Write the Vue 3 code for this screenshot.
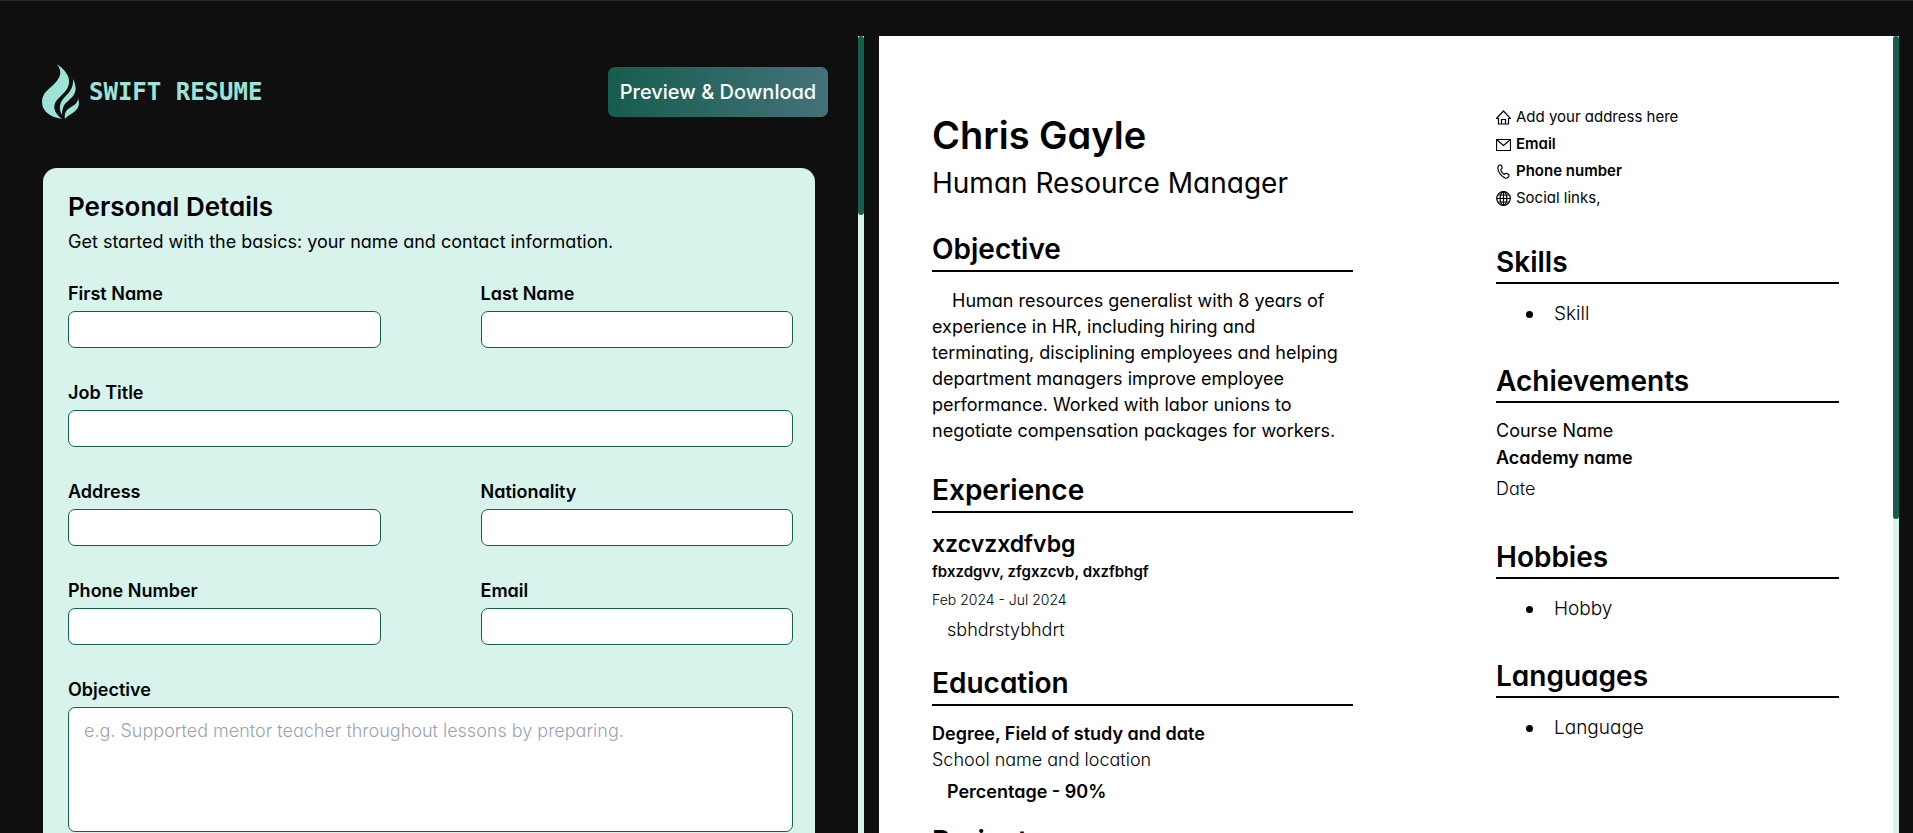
<script setup>
import { reactive } from 'vue'

const form = reactive({
  firstName: '',
  lastName: '',
  jobTitle: '',
  address: '',
  nationality: '',
  phone: '',
  email: '',
  objective: '',
})

const fields = [
  { key: 'firstName', label: 'First Name' },
  { key: 'lastName', label: 'Last Name' },
  { key: 'jobTitle', label: 'Job Title', wide: true },
  { key: 'address', label: 'Address' },
  { key: 'nationality', label: 'Nationality' },
  { key: 'phone', label: 'Phone Number' },
  { key: 'email', label: 'Email' },
]
</script>

<template>
  <div class="page">
    <section class="pane editor">
      <div class="scroll">
        <header class="topbar">
          <a class="logo" href="#">
            <svg class="flame" viewBox="0 0 38 56" aria-hidden="true">
              <path d="M15 0C23 6 28 12 27 19C26 27 20 30 15 36C10 42 12 49 20 55C9 53 0 48 0 38C0 28 8 25 14 18C19 12 20 7 15 0Z" />
              <path d="M31 15C34 21 35 27 31 32C28 36 22 39 21 44C20 47 20 49 20 51C17 46 17 40 21 35C25 30 32 26 31 15Z" />
              <path d="M36 34C38 40 37 44 32 48C28 51 25 52 23 55C22 49 24 46 29 43C34 40 36 38 36 34Z" />
            </svg>
            <span class="brand">SWIFT RESUME</span>
          </a>
          <button class="download" type="button">Preview &amp; Download</button>
        </header>

        <form class="card" @submit.prevent>
          <h2>Personal Details</h2>
          <p class="hint">Get started with the basics: your name and contact information.</p>
          <div class="fields">
            <div v-for="f in fields" :key="f.key" class="field" :class="{ wide: f.wide }">
              <label :for="f.key">{{ f.label }}</label>
              <input :id="f.key" v-model="form[f.key]" type="text" />
            </div>
            <div class="field wide">
              <label for="objective">Objective</label>
              <textarea
                id="objective"
                v-model="form.objective"
                placeholder="e.g. Supported mentor teacher throughout lessons by preparing."
              ></textarea>
            </div>
          </div>
        </form>
      </div>
      <div class="track"><div class="thumb short"></div></div>
    </section>

    <section class="pane preview">
      <div class="scroll">
        <article class="resume">
          <div class="main">
            <h1>Chris Gayle</h1>
            <p class="role">Human Resource Manager</p>

            <section class="block objective">
              <h2>Objective</h2>
              <p class="summary">
                Human resources generalist with 8 years of experience in HR, including hiring and
                terminating, disciplining employees and helping department managers improve employee
                performance. Worked with labor unions to negotiate compensation packages for workers.
              </p>
            </section>

            <section class="block experience">
              <h2>Experience</h2>
              <h3>xzcvzxdfvbg</h3>
              <p class="place">fbxzdgvv, zfgxzcvb, dxzfbhgf</p>
              <p class="period">Feb 2024 - Jul 2024</p>
              <p class="detail light">sbhdrstybhdrt</p>
            </section>

            <section class="block education">
              <h2>Education</h2>
              <p class="text strong">Degree, Field of study and date</p>
              <p class="text school light">School name and location</p>
              <p class="detail strong">Percentage - 90%</p>
            </section>

            <section class="block projects">
              <h2>Projects</h2>
            </section>
          </div>

          <aside class="side">
            <ul class="contact">
              <li>
                <svg viewBox="0 0 15 15" aria-hidden="true">
                  <path d="M.5 8.500L7.500 1L14.500 8.500H12.500V14H2.500V8.500ZM5.500 14V9.500H9.500V14" />
                </svg>
                <span>Add your address here</span>
              </li>
              <li class="strong">
                <svg viewBox="0 0 15 15" aria-hidden="true">
                  <path d="M.5 2.500H14.500V13.500H.5ZM1 3L7.500 8.500L14 3" />
                </svg>
                <span>Email</span>
              </li>
              <li class="strong">
                <svg viewBox="0 0 15 15" aria-hidden="true">
                  <path d="M3 1.500L4.500 .8C5.500 .8 6.500 3.500 6 4.500L4.800 5.700C5 7.500 6.800 10 8.500 10.300L10 9.300C11 9 13 10.800 13 11.800C13 13 11 14.500 9.500 14.200C5.500 13 2 8 1.800 4C1.800 3 2.200 2.200 3 1.500Z" />
                </svg>
                <span>Phone number</span>
              </li>
              <li>
                <svg viewBox="0 0 15 15" aria-hidden="true">
                  <circle cx="7.500" cy="7.500" r="6.800" />
                  <ellipse cx="7.500" cy="7.500" rx="3.400" ry="6.800" />
                  <path d="M7.500 .7V14.300M.7 7.500H14.300M1.800 4H13.200M1.800 11H13.200" />
                </svg>
                <span>Social links,</span>
              </li>
            </ul>

            <section class="block">
              <h2>Skills</h2>
              <ul class="bullets"><li>Skill</li></ul>
            </section>

            <section class="block">
              <h2>Achievements</h2>
              <p class="text">Course Name</p>
              <p class="text academy strong">Academy name</p>
              <p class="text date light">Date</p>
            </section>

            <section class="block">
              <h2>Hobbies</h2>
              <ul class="bullets"><li>Hobby</li></ul>
            </section>

            <section class="block">
              <h2>Languages</h2>
              <ul class="bullets"><li>Language</li></ul>
            </section>
          </aside>
        </article>
      </div>
      <div class="track"><div class="thumb tall"></div></div>
    </section>
  </div>
</template>

<style>
body {
  background: #0f0f0f;
}
</style>

<style scoped>
.page,
.page * {
  box-sizing: border-box;
}
.page {
  display: grid;
  grid-template-columns: 864fr 1020fr;
  gap: 15px;
  height: 100vh;
  padding: 35px 14px 0 0;
  border-top: 1px solid #2b2b2b;
  overflow: hidden;
  background: #0f0f0f;
  color: #000;
  font-family: Inter, "Noto Sans", sans-serif;
  font-feature-settings: "cv11";
  font-size: 18px;
  line-height: 24px;
}
h1,
h2,
h3,
p,
ul {
  margin: 0;
  padding: 0;
}
.pane {
  display: flex;
  min-width: 0;
  min-height: 0;
}
.scroll {
  flex: 1;
  min-width: 0;
  overflow-y: auto;
  scrollbar-width: none;
}
.track {
  flex: none;
  width: 6px;
  background: #d7f3ec;
}
.thumb {
  border-radius: 3px;
  background: #165d4e;
}
.short {
  height: 22.5%;
}
.tall {
  height: 60.6%;
}

.topbar {
  display: flex;
  align-items: center;
  justify-content: space-between;
  padding: 28px 30px 48px 42px;
}
.logo {
  display: flex;
  align-items: center;
  gap: 9px;
  color: #9fe3d8;
  text-decoration: none;
}
.flame {
  width: 38px;
  height: 56px;
  fill: currentColor;
}
.brand {
  font-family: "DejaVu Sans Mono", monospace;
  font-size: 24px;
  font-weight: 700;
  line-height: 32px;
  white-space: nowrap;
}
.download {
  width: 220px;
  height: 50px;
  padding: 0;
  border: 0;
  border-radius: 7px;
  background: linear-gradient(90deg, #165d4e, #44727a);
  color: #fff;
  font: inherit;
  font-feature-settings: inherit;
  font-size: 20px;
  font-weight: 500;
}

.card {
  margin: 0 43px;
  padding: 23px 22px 33px 25px;
  border-radius: 14px;
  background: #d7f3ec;
}
.card h2 {
  font-size: 26px;
  font-weight: 600;
  line-height: 32px;
}
.hint {
  margin-top: 7px;
}
.fields {
  display: grid;
  grid-template-columns: 1fr 1fr;
  gap: 33px 100px;
  margin-top: 28px;
}
.field {
  display: flex;
  flex-direction: column;
  gap: 5px;
}
.wide {
  grid-column: 1 / -1;
}
.field label {
  font-weight: 600;
}
.field input,
.field textarea {
  width: 100%;
  height: 37px;
  padding: 0 15px;
  border: 1px solid #165d4e;
  border-radius: 7px;
  outline: none;
  background: #fff;
  color: #000;
  font: inherit;
  font-feature-settings: inherit;
  font-weight: 300;
}
.field textarea {
  height: 125px;
  padding: 11px 15px;
  resize: none;
}
.field textarea::placeholder {
  color: #9ca3af;
}

.preview .scroll {
  background: #fff;
}
.resume {
  display: grid;
  grid-template-columns: 421fr 343fr;
  gap: 143px;
  padding: 69px 54px 40px 53px;
}
.main {
  padding-top: 6px;
}
h1 {
  font-size: 38px;
  font-weight: 600;
  line-height: 48px;
}
.role {
  margin-top: 6px;
  font-size: 28px;
  line-height: 36px;
}
.block h2 {
  margin-bottom: 16px;
  padding-bottom: 3px;
  border-bottom: 2px solid #000;
  font-size: 28px;
  font-weight: 600;
  line-height: 36px;
}
.side .block h2 {
  padding-bottom: 2px;
}
.objective {
  margin-top: 30px;
}
.summary {
  line-height: 26px;
  text-indent: 20px;
}
.experience {
  margin-top: 28px;
}
h3 {
  font-size: 23px;
  font-weight: 600;
  line-height: 30px;
}
.place,
.period {
  line-height: 20px;
}
.place {
  margin-top: 3px;
  font-size: 15px;
  font-weight: 600;
}
.period {
  margin-top: 8px;
  font-size: 14px;
  font-weight: 300;
}
.detail {
  margin-top: 8px;
  padding-left: 15px;
}
.education {
  margin-top: 23px;
}
.projects {
  margin-top: 19px;
}
.school {
  margin-top: 2px;
}
.academy {
  margin-top: 3px;
}
.date {
  margin-top: 7px;
  padding-bottom: 3px;
}
.strong {
  font-weight: 600;
}
.light {
  font-weight: 300;
}

.contact {
  display: flex;
  flex-direction: column;
  gap: 3px;
  list-style: none;
  font-size: 15px;
}
.contact li {
  display: flex;
  align-items: center;
  gap: 5px;
}
.contact svg {
  flex: none;
  width: 15px;
  height: 15px;
  fill: none;
  stroke: #000;
  stroke-width: 1.2;
}
.side .block {
  margin-top: 35px;
}
.contact + .block {
  margin-top: 34px;
}
.bullets {
  padding-left: 30px;
  list-style: none;
  font-size: 19px;
  font-weight: 300;
  line-height: 28px;
}
.bullets li {
  display: flex;
  align-items: center;
  gap: 21px;
}
.bullets li::before {
  width: 7px;
  height: 7px;
  border-radius: 50%;
  background: #000;
  content: "";
}
</style>
